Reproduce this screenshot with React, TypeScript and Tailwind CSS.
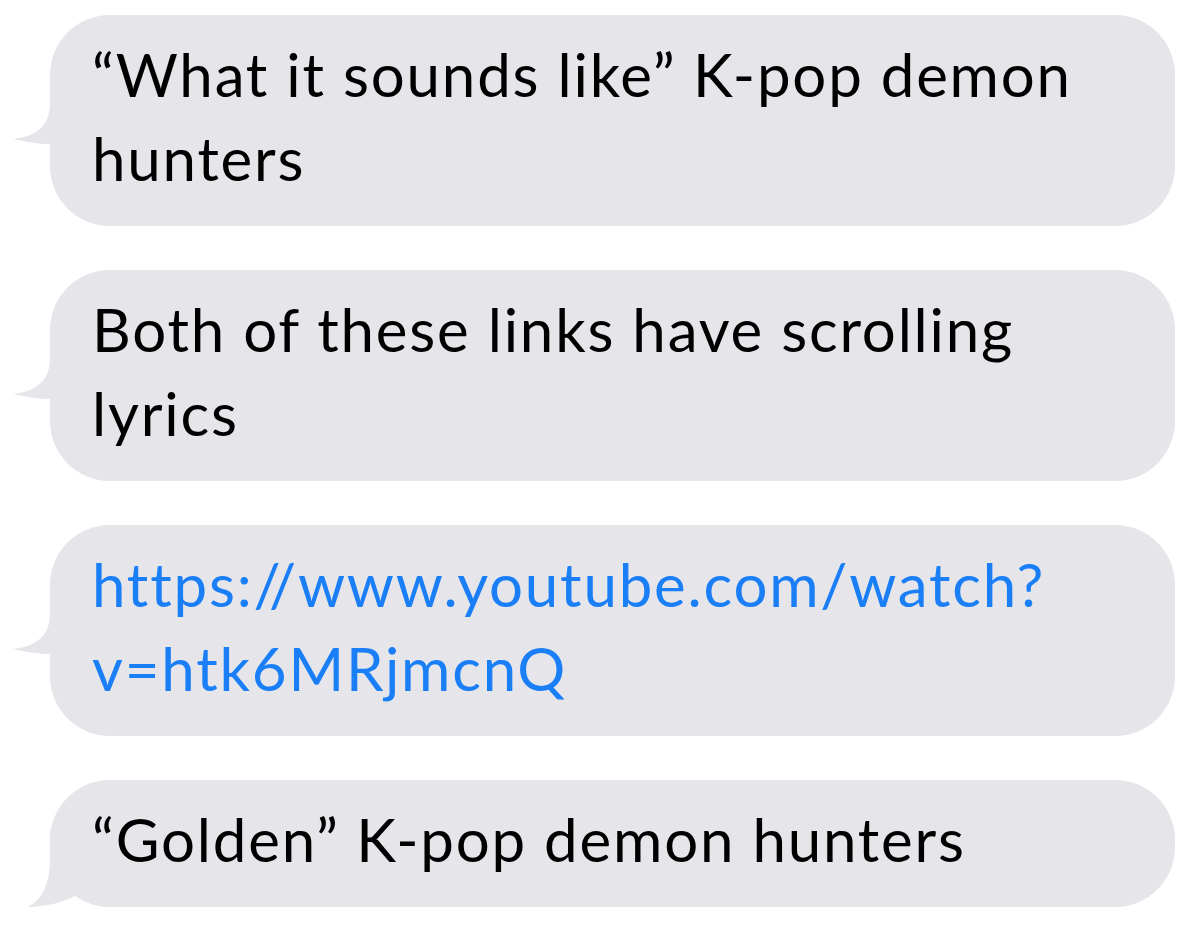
const BUBBLE = "#e5e5ea";

type Msg = { lines: string[]; link?: boolean; tail: "mid" | "bottom" };

const messages: Msg[] = [
  { lines: ["\u201CWhat it sounds like\u201D K-pop demon", "hunters"], tail: "mid" },
  { lines: ["Both of these links have scrolling", "lyrics"], tail: "mid" },
  { lines: ["https://www.youtube.com/watch?", "v=htk6MRjmcnQ"], link: true, tail: "mid" },
  { lines: ["\u201CGolden\u201D K-pop demon hunters"], tail: "bottom" },
];

const MidTail = () => (
  <svg
    className="absolute left-[-40px] top-[72px]"
    width="44"
    height="60"
    viewBox="0 0 44 60"
  >
    <path
      d="M44 0 L40 0 L40 16 C40 36 30 49 3 52 C16 55 30 57 40 57 L44 57 Z"
      fill={BUBBLE}
    />
  </svg>
);

const BottomTail = () => (
  <svg
    className="absolute left-[-30px] bottom-0"
    width="92"
    height="77"
    viewBox="0 0 92 77"
  >
    <path
      d="M34 0 L30 0 L30 28 C30 54 22 71 7 77 C25 77 45 72 57 65 C65 72 75 77 92 77 L92 0 Z"
      fill={BUBBLE}
    />
  </svg>
);

const Bubble = ({ msg }: { msg: Msg }) => (
  <div className="relative w-[1125px] rounded-[60px] bg-[#e5e5ea] px-[42px] pt-[17px] pb-[26px]">
    {msg.tail === "mid" ? <MidTail /> : <BottomTail />}
    <p
      className={
        "relative text-[60px] leading-[84px] tracking-[0.03em] " +
        (msg.link ? "text-[#1a7ff7]" : "text-black")
      }
    >
      {msg.lines.map((l, i) => (
        <span key={i}>
          {l}
          {i < msg.lines.length - 1 && <br />}
        </span>
      ))}
    </p>
  </div>
);

export default function App() {
  return (
    <div
      className="min-h-[929px] w-[1200px] bg-white pl-[50px] pt-[15px]"
      style={{ fontFamily: "Lato, 'Noto Sans', sans-serif" }}
    >
      <div className="flex flex-col gap-[44px]">
        {messages.map((m, i) => (
          <Bubble key={i} msg={m} />
        ))}
      </div>
    </div>
  );
}
